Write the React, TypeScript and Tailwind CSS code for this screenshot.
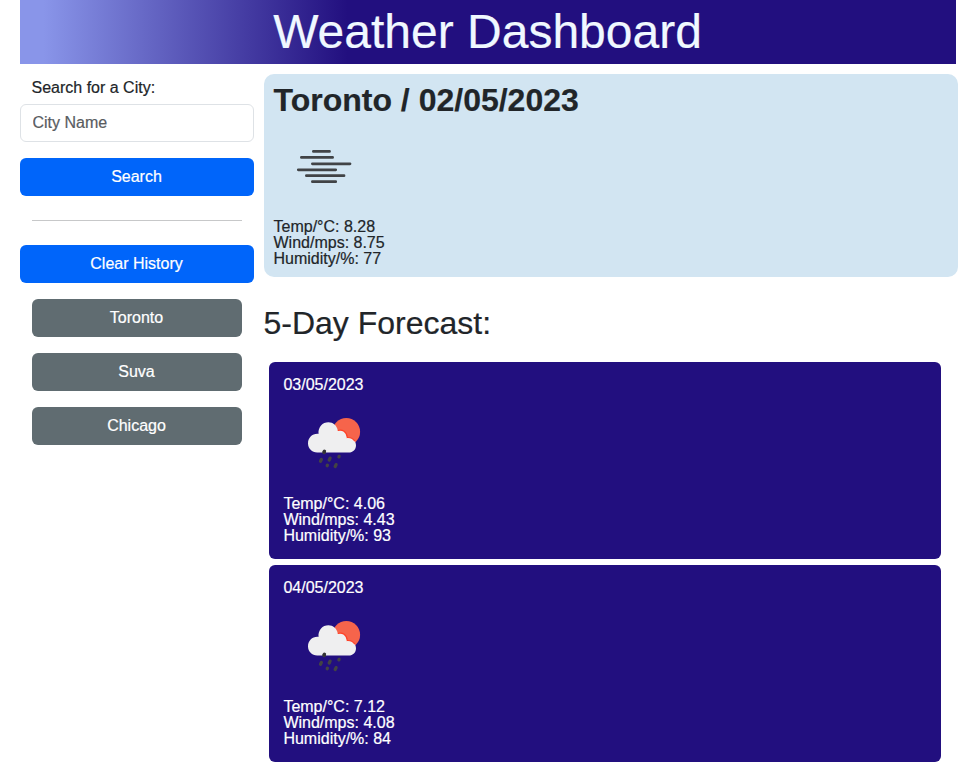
function FogIcon() {
  return (
    <svg viewBox="0 0 80 60" className="block h-[60px] w-20" stroke="#414346" strokeWidth="2.8" strokeLinecap="round">
      <path d="M29.4 11.4H45.500M17.400 17.400H48.600M28.400 23.800H66M14.300 29.800H51.700M22.400 35.700H60M28.400 41.700H51.700" />
    </svg>
  );
}

function RainIcon() {
  return (
    <svg viewBox="0 0 80 75" className="block h-[75px] w-20">
      <circle cx="51.300" cy="26.700" r="13.800" fill="#f6644b" />
      <path
        d="M22.200 47.500C17 47.500 13 43.400 13 38.200s4-9.400 9.400-9.400c.4 0 .8 0 1.100.1C23 22 27.500 17.300 33.400 17.300c4.700 0 8.300 3 9.400 8.200 4.500-1.600 9 1.500 9.500 7 5.200-.3 8.700 3.500 8.700 7.700 0 4.200-3 7.300-7.300 7.300Z"
        fill="#efeff0"
      />
      <path d="M42.800 25.500c4.500-1.600 9 1.500 9.500 7 3.400-.2 6 1.300 7.500 3.600" fill="none" stroke="#ff4026" strokeWidth="1.200" />
      <path d="m29.500 46.300-.5 1.200M26.400 54.400l-.9 1.900M35.100 53.100l-.9 1.900M44.100 51.400l-.2.500M32.400 60.200l-.2.500M41.100 59.600l-.9 1.900" stroke="#434344" strokeWidth="3.300" strokeLinecap="round" />
      <circle cx="29.200" cy="46.900" r="1.800" fill="#333334" />
    </svg>
  );
}

const history = ["Toronto", "Suva", "Chicago"];

const forecast = [
  { date: "03/05/2023", temp: "4.06", wind: "4.43", humidity: "93" },
  { date: "04/05/2023", temp: "7.12", wind: "4.08", humidity: "84" },
];

function Readings({ temp, wind, humidity }: { temp: string; wind: string; humidity: string }) {
  return (
    <div className="text-base leading-4">
      <p>Temp/°C: {temp}</p>
      <p>Wind/mps: {wind}</p>
      <p>Humidity/%: {humidity}</p>
    </div>
  );
}

export default function App() {
  return (
    <div className="h-[766px] overflow-hidden bg-white pl-5 font-['Liberation_Sans',Arial,sans-serif] text-base text-[#212529] [-webkit-text-stroke:0.2px_currentColor]">
      <header className="flex h-16 w-[936px] justify-center bg-[linear-gradient(90deg,#8995e9_2.5%,#220f7f_35%)]">
        <h1 className="pr-px text-[48px] leading-[64px] text-[#f0f8ff]">Weather Dashboard</h1>
      </header>

      <div className="flex gap-2.5">
        <aside className="w-[234px] pt-3">
          <label htmlFor="city" className="block pl-[11.5px] leading-6">
            Search for a City:
          </label>
          <input
            id="city"
            placeholder="City Name"
            className="mt-1 block h-[38px] w-full rounded-md border border-[#dee2e6] px-[11.5px] placeholder:text-[#595c5f]"
          />
          <button className="mt-4 block h-[38px] w-full rounded-md bg-[#0065fa] pr-px pb-px text-white">Search</button>
          <hr className="mx-3 my-6 border-[#c7c8c9]" />
          <button className="block h-[38px] w-full rounded-md bg-[#0065fa] pr-px pb-px text-white">Clear History</button>
          <div className="mx-3 mt-4 flex flex-col gap-4">
            {history.map((city) => (
              <button key={city} className="h-[38px] rounded-md bg-[#606c71] pr-px pb-px text-white">
                {city}
              </button>
            ))}
          </div>
        </aside>

        <main className="w-[694px] pt-2.5">
          <section className="h-[203px] rounded-[10px] bg-[#d2e5f2] px-[9.5px] pt-[7px]">
            <h2 className="text-[32px] leading-[38px] font-bold">Toronto / 02/05/2023</h2>
            <div className="mt-[21px] mb-[19px] ml-[10.5px]">
              <FogIcon />
            </div>
            <Readings temp="8.28" wind="8.75" humidity="77" />
          </section>

          <h2 className="mt-[27px] -ml-[0.5px] text-[32px] leading-[38px]">5-Day Forecast:</h2>

          <div className="mt-5 ml-[5px] flex w-[672px] flex-col gap-1.5">
            {forecast.map((day) => (
              <article key={day.date} className="h-[197px] rounded-md bg-[#220f7f] px-[14.4px] pt-[15px] text-white">
                <h3 className="leading-4">{day.date}</h3>
                <div className="mt-3 mb-4 ml-[11.6px]">
                  <RainIcon />
                </div>
                <Readings temp={day.temp} wind={day.wind} humidity={day.humidity} />
              </article>
            ))}
          </div>
        </main>
      </div>
    </div>
  );
}
